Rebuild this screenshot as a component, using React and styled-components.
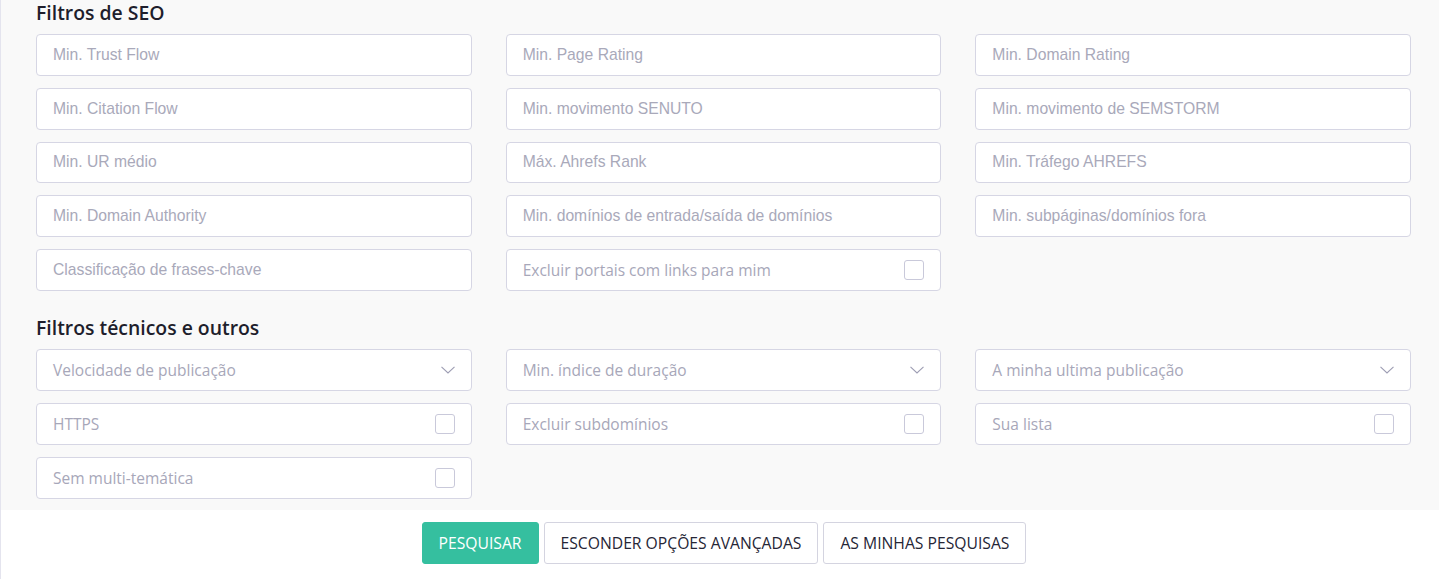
import React from "react";
import styled, { createGlobalStyle } from "styled-components";

const GlobalStyle = createGlobalStyle`
  html, body {
    margin: 0;
    padding: 0;
    background: #ffffff;
  }
  * {
    box-sizing: border-box;
  }
`;

const Page = styled.div`
  width: 1439px;
  min-height: 579px;
  border-left: 1px solid #e4e4ee;
  background: #ffffff;
`;

const Filters = styled.div`
  background: #f9f9f9;
  padding: 0 28px 11px 35px;
`;

const Section = styled.section`
  & + & {
    margin-top: 24px;
  }
`;

const SectionTitle = styled.h3`
  font-family: "Open Sans", sans-serif;
  font-weight: 600;
  font-size: 19.4px;
  line-height: 26px;
  color: #1e1e2c;
  margin: 0 0 8px;
`;

const Grid = styled.div`
  display: grid;
  grid-template-columns: repeat(3, 1fr);
  column-gap: 34px;
  row-gap: 12px;
`;

const TextInput = styled.input`
  display: block;
  width: 100%;
  height: 41.75px;
  padding: 0 16px;
  border: 1px solid #d6d6e4;
  border-radius: 4px;
  background: #ffffff;
  font-family: "Liberation Sans", Arial, sans-serif;
  font-size: 15.7px;
  color: #333344;
  outline: none;

  &::placeholder {
    color: #a9a9ba;
  }
`;

const Field = styled.div`
  display: flex;
  align-items: center;
  justify-content: space-between;
  height: ${(p) => (p.$compact ? "41.75px" : "42px")};
  padding: 0 16px;
  border: 1px solid #d6d6e4;
  border-radius: 4px;
  background: #ffffff;
  cursor: pointer;
`;

const FieldLabel = styled.span`
  font-family: "Open Sans", sans-serif;
  font-size: 15.5px;
  color: #a7a7b9;
  white-space: nowrap;
`;

const Box = styled.span`
  width: 20px;
  height: 20px;
  flex: none;
  border: 1px solid #c9c9da;
  border-radius: 3px;
  background: #ffffff;
`;

const Chevron = () => (
  <svg width="14" height="8" viewBox="0 0 14 8" fill="none">
    <path d="M0.5 0.8 L7 7 L13.5 0.8" stroke="#9d9db3" strokeWidth="1.1" />
  </svg>
);

const Footer = styled.div`
  display: flex;
  justify-content: center;
  gap: 5px;
  padding: 12px 0 15px 8px;
  background: #ffffff;
`;

const Button = styled.button`
  height: 42px;
  padding: 0 16px;
  border-radius: 3px;
  border: 1px solid ${(p) => (p.$primary ? "#35bf9f" : "#d4d4e0")};
  background: ${(p) => (p.$primary ? "#35bf9f" : "#ffffff")};
  color: ${(p) => (p.$primary ? "#ffffff" : "#262636")};
  font-family: "Open Sans", sans-serif;
  font-size: 15.7px;
  text-transform: uppercase;
  cursor: pointer;
`;

const seoFields = [
  "Min. Trust Flow",
  "Min. Page Rating",
  "Min. Domain Rating",
  "Min. Citation Flow",
  "Min. movimento SENUTO",
  "Min. movimento de SEMSTORM",
  "Min. UR médio",
  "Máx. Ahrefs Rank",
  "Min. Tráfego AHREFS",
  "Min. Domain Authority",
  "Min. domínios de entrada/saída de domínios",
  "Min. subpáginas/domínios fora",
  "Classificação de frases-chave",
];

const techFields = [
  { label: "Velocidade de publicação", kind: "select" },
  { label: "Min. índice de duração", kind: "select" },
  { label: "A minha ultima publicação", kind: "select" },
  { label: "HTTPS", kind: "check" },
  { label: "Excluir subdomínios", kind: "check" },
  { label: "Sua lista", kind: "check" },
  { label: "Sem multi-temática", kind: "check" },
];

function ChoiceField({ label, kind, compact }) {
  return (
    <Field $compact={compact}>
      <FieldLabel>{label}</FieldLabel>
      {kind === "select" ? <Chevron /> : <Box />}
    </Field>
  );
}

export default function App() {
  return (
    <>
      <GlobalStyle />
      <Page>
        <Filters>
          <Section>
            <SectionTitle>Filtros de SEO</SectionTitle>
            <Grid>
              {seoFields.map((f) => (
                <TextInput key={f} placeholder={f} />
              ))}
              <ChoiceField
                label="Excluir portais com links para mim"
                kind="check"
                compact
              />
            </Grid>
          </Section>
          <Section>
            <SectionTitle>Filtros técnicos e outros</SectionTitle>
            <Grid>
              {techFields.map((f) => (
                <ChoiceField key={f.label} {...f} />
              ))}
            </Grid>
          </Section>
        </Filters>
        <Footer>
          <Button $primary>Pesquisar</Button>
          <Button>Esconder opções avançadas</Button>
          <Button>As minhas pesquisas</Button>
        </Footer>
      </Page>
    </>
  );
}
